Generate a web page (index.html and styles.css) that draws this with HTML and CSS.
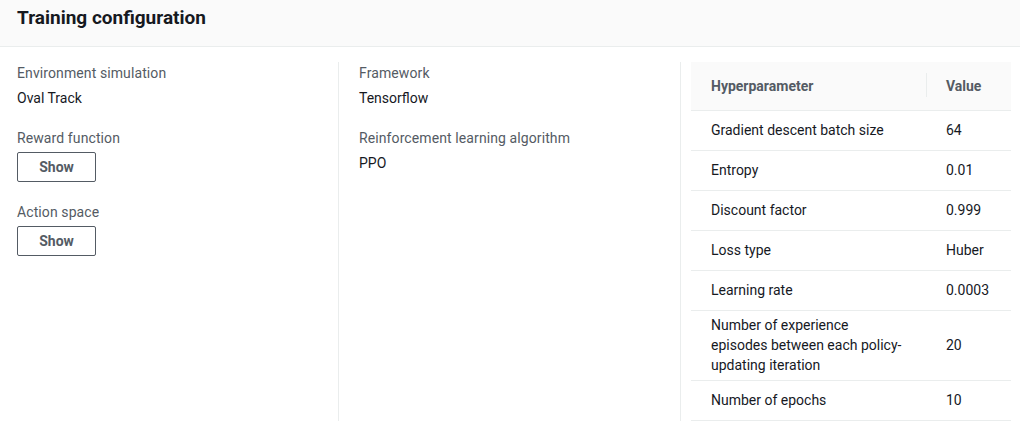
FILE: index.html
```html
<!DOCTYPE html>
<html lang="en">
<head>
<meta charset="utf-8">
<title>Training configuration</title>
<link rel="stylesheet" href="styles.css">
</head>
<body>
<div class="panel">
  <div class="panel-header">
    <h2 class="panel-title">Training configuration</h2>
  </div>
  <div class="panel-body">
    <div class="col col-first">
      <div class="kv">
        <div class="kv-label">Environment simulation</div>
        <div class="kv-value">Oval Track</div>
      </div>
      <div class="kv kv-btn">
        <div class="kv-label">Reward function</div>
        <div class="kv-value"><button class="btn" type="button">Show</button></div>
      </div>
      <div class="kv kv-btn">
        <div class="kv-label">Action space</div>
        <div class="kv-value"><button class="btn" type="button">Show</button></div>
      </div>
    </div>
    <div class="col col-mid">
      <div class="kv">
        <div class="kv-label">Framework</div>
        <div class="kv-value">Tensorflow</div>
      </div>
      <div class="kv">
        <div class="kv-label">Reinforcement learning algorithm</div>
        <div class="kv-value">PPO</div>
      </div>
    </div>
    <div class="col col-last">
      <table class="hp-table">
        <thead>
          <tr>
            <th class="c-name">Hyperparameter</th>
            <th class="c-value">Value</th>
          </tr>
        </thead>
        <tbody>
          <tr><td>Gradient descent batch size</td><td>64</td></tr>
          <tr><td>Entropy</td><td>0.01</td></tr>
          <tr><td>Discount factor</td><td>0.999</td></tr>
          <tr><td>Loss type</td><td>Huber</td></tr>
          <tr><td>Learning rate</td><td>0.0003</td></tr>
          <tr><td>Number of experience episodes between each policy-updating iteration</td><td>20</td></tr>
          <tr><td>Number of epochs</td><td>10</td></tr>
        </tbody>
      </table>
    </div>
  </div>
</div>
</body>
</html>
```

FILE: styles.css
```css
* {
  box-sizing: border-box;
}

html, body {
  margin: 0;
  padding: 0;
  background: #ffffff;
}

body {
  font-family: Roboto, "Liberation Sans", Arial, sans-serif;
  font-size: 14px;
  line-height: 22px;
  color: #16191f;
}

.panel {
  width: 1020px;
}

.panel-header {
  background: #fafafa;
  border-bottom: 1px solid #eaeded;
  height: 47px;
  padding: 7px 17px 0;
}

.panel-title {
  margin: 0;
  font-size: 19px;
  line-height: 22px;
  font-weight: 700;
  color: #16191f;
}

.panel-body {
  display: grid;
  grid-template-columns: 338px 342px 340px;
  padding-top: 15px;
}

.col {
  min-width: 0;
}

.col-first {
  padding-left: 17px;
}

.col-mid {
  border-left: 1px solid #eaeded;
  padding-left: 20px;
}

.col-last {
  border-left: 1px solid #eaeded;
  padding-left: 10px;
}

.kv {
  margin-bottom: 18px;
}

.kv-btn {
  margin-bottom: 19px;
}

.kv-label {
  color: #545b64;
  line-height: 22px;
  margin-bottom: 3px;
  letter-spacing: 0.1px;
}

.kv-value {
  color: #16191f;
  line-height: 22px;
}

.btn {
  display: block;
  margin-top: 1px;
  width: 79px;
  height: 30px;
  padding: 0 20px;
  border: 1px solid #545b64;
  border-radius: 2px;
  background: #ffffff;
  color: #545b64;
  font-family: inherit;
  font-size: 14px;
  font-weight: 700;
  line-height: 28px;
  text-align: center;
}

.hp-table {
  width: 320px;
  border-collapse: separate;
  border-spacing: 0;
  table-layout: fixed;
}

.hp-table .c-name {
  width: 235px;
}

.hp-table .c-value {
  width: 85px;
}

.hp-table th {
  position: relative;
  height: 49px;
  padding: 0 20px;
  background: #fafafa;
  border-bottom: 1px solid #eaeded;
  color: #545b64;
  font-weight: 700;
  text-align: left;
  line-height: 20px;
  vertical-align: middle;
}

.hp-table th.c-value::before {
  content: "";
  position: absolute;
  left: 0;
  top: 11px;
  height: 24px;
  border-left: 1px solid #eaeded;
}

.hp-table td {
  height: 40px;
  padding: 4px 20px 5px;
  border-bottom: 1px solid #eaeded;
  line-height: 20px;
  vertical-align: middle;
  color: #16191f;
}
```
